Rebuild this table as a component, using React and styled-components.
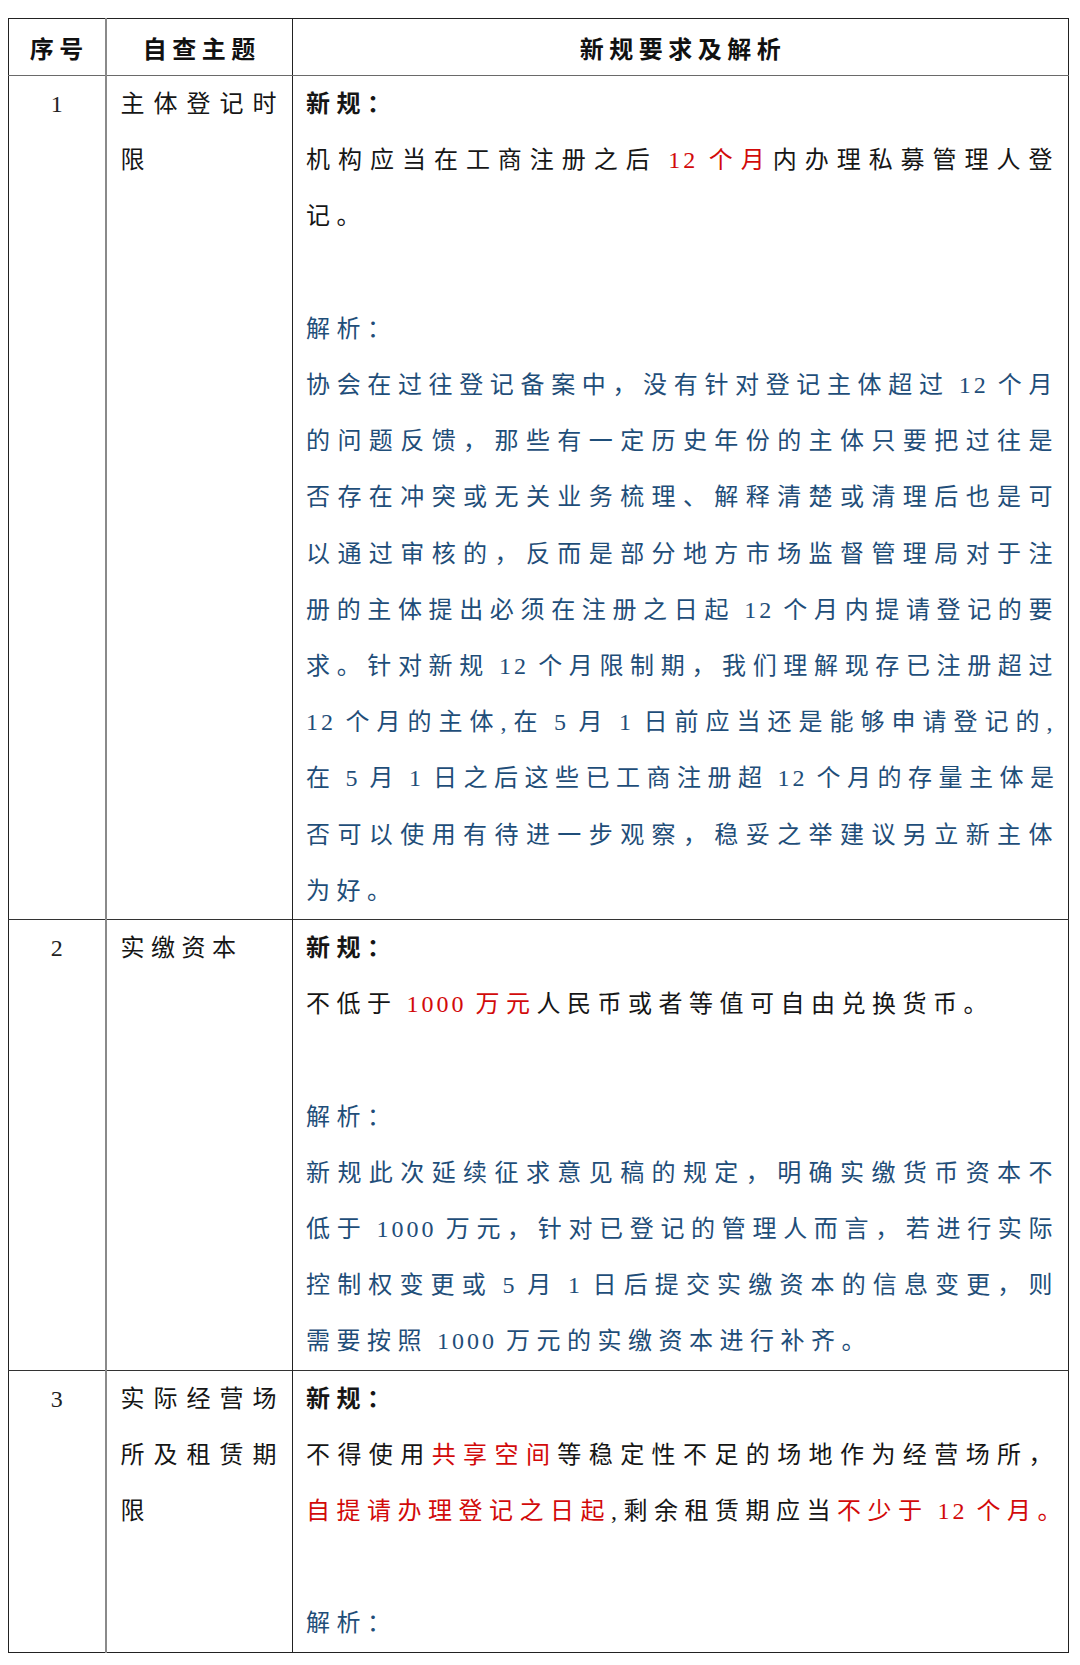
import React from 'react';
import styled, { createGlobalStyle } from 'styled-components';

const GlobalStyle = createGlobalStyle`
  html, body {
    margin: 0;
    padding: 0;
    background: #fff;
  }
  body {
    font-family: "Liberation Serif", "Noto Sans CJK SC", serif;
    color: #161616;
  }
`;

// page wrapper, table sits 18px from the top and 8px from the left
const Page = styled.div`
  padding: 18px 11px 0 8px;
  width: 1080px;
  box-sizing: border-box;
`;

const Table = styled.table`
  width: 100%;
  border-collapse: collapse;
  table-layout: fixed;
  border: 1.5px solid #222;
`;

const HeadCell = styled.th`
  height: 56px;
  padding: 0;
  font-size: 24px;
  font-weight: 700;
  letter-spacing: 5.5px;
  text-indent: 5px;
  text-align: center;
  vertical-align: middle;
  color: #111;
  border-bottom: 1.5px solid #6a6a6a;
  border-left: ${({ $sep }) => $sep || 'none'};
`;

const Cell = styled.td`
  padding: ${({ $pad }) => $pad || '0'};
  vertical-align: top;
  font-size: 24px;
  line-height: 56.2px;
  letter-spacing: 6.5px;
  border-top: 1.5px solid #333;
  border-left: ${({ $sep }) => $sep || 'none'};
  text-align: ${({ $align }) => $align || 'justify'};
`;

const IndexText = styled.span`
  display: block;
  text-align: center;
  letter-spacing: 0;
  color: #222;
`;

const Line = styled.span`
  display: block;
  text-align: justify;
  text-align-last: ${({ $last }) => ($last ? 'left' : 'justify')};
  color: ${({ $tone }) => ($tone === 'blue' ? '#1f4e79' : '#161616')};
  font-weight: ${({ $bold }) => ($bold ? 700 : 400)};
  white-space: nowrap;
`;

const Red = styled.span`
  color: #d20a0a;
`;

// digits are set tight, like the Times runs in the original document
const Num = styled.span`
  letter-spacing: 3px;
`;

const COL1 = '2px solid #8a8a8a';
const COL2 = '1.5px solid #222';

// wraps every " 12 " style number run in <Num>
const fmt = (str) =>
  str.split(/( ?\d+ ?)/).map((part, i) =>
    /\d/.test(part) ? <Num key={i}>{part}</Num> : part
  );

const rows = [
  {
    no: '1',
    topic: '主体登记时限',
    rule: [
      <>机构应当在工商注册之后<Red>{fmt(' 12 ')}个月</Red>内办理私募管理人登</>,
      '记。',
    ],
    analysis: [
      '协会在过往登记备案中，没有针对登记主体超过 12 个月',
      '的问题反馈，那些有一定历史年份的主体只要把过往是',
      '否存在冲突或无关业务梳理、解释清楚或清理后也是可',
      '以通过审核的，反而是部分地方市场监督管理局对于注',
      '册的主体提出必须在注册之日起 12 个月内提请登记的要',
      '求。针对新规 12 个月限制期，我们理解现存已注册超过',
      '12 个月的主体,在 5 月 1 日前应当还是能够申请登记的,',
      '在 5 月 1 日之后这些已工商注册超 12 个月的存量主体是',
      '否可以使用有待进一步观察，稳妥之举建议另立新主体',
      '为好。',
    ],
  },
  {
    no: '2',
    topic: '实缴资本',
    rule: [<>不低于<Red>{fmt(' 1000 ')}万元</Red>人民币或者等值可自由兑换货币。</>],
    analysis: [
      '新规此次延续征求意见稿的规定，明确实缴货币资本不',
      '低于 1000 万元，针对已登记的管理人而言，若进行实际',
      '控制权变更或 5 月 1 日后提交实缴资本的信息变更，则',
      '需要按照 1000 万元的实缴资本进行补齐。',
    ],
  },
  {
    no: '3',
    topic: '实际经营场所及租赁期限',
    rule: [
      <>不得使用<Red>共享空间</Red>等稳定性不足的场地作为经营场所，</>,
      <><Red>自提请办理登记之日起</Red>,剩余租赁期应当<Red>不少于{fmt(' 12 ')}个月。</Red></>,
    ],
    analysis: [],
  },
];

const Block = ({ lines, tone }) =>
  lines.map((text, i) => (
    <Line key={i} $tone={tone} $last={i === lines.length - 1}>
      {typeof text === 'string' ? fmt(text) : text}
    </Line>
  ));

export default function App() {
  return (
    <Page>
      <GlobalStyle />
      <Table>
        <colgroup>
          <col style={{ width: '97px' }} />
          <col style={{ width: '187px' }} />
          <col />
        </colgroup>
        <thead>
          <tr>
            <HeadCell>序号</HeadCell>
            <HeadCell $sep={COL1}>自查主题</HeadCell>
            <HeadCell $sep={COL2}>新规要求及解析</HeadCell>
          </tr>
        </thead>
        <tbody>
          {rows.map((row) => (
            <tr key={row.no}>
              <Cell>
                <IndexText>{row.no}</IndexText>
              </Cell>
              <Cell $sep={COL1} $pad="0 9px 0 14px">
                {row.topic}
              </Cell>
              <Cell $sep={COL2} $pad="0 9px 0 13px">
                <Line $bold $last>新规：</Line>
                <Block lines={row.rule} />
                <Line $last>&nbsp;</Line>
                <Line $tone="blue" $last>解析：</Line>
                <Block lines={row.analysis} tone="blue" />
              </Cell>
            </tr>
          ))}
        </tbody>
      </Table>
    </Page>
  );
}
